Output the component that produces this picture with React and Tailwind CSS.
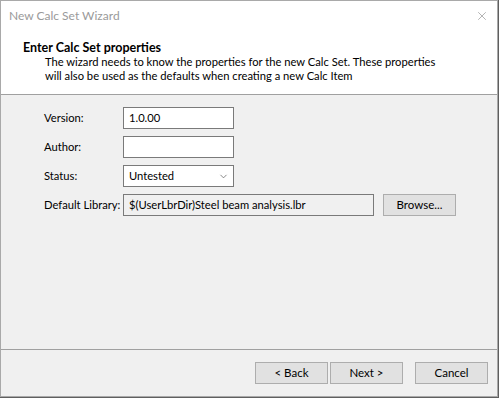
import { ChevronDown, X } from "lucide-react";

const font = { fontFamily: 'Lato, "Noto Sans", sans-serif' };

function Field({ label, children }) {
  return (
    <div className="flex items-center h-[22px]">
      <span className="w-[79px] text-black whitespace-nowrap">{label}</span>
      {children}
    </div>
  );
}

function Button({ children, className = "" }) {
  return (
    <button
      className={`h-[22px] w-[73px] bg-[#e1e1e1] border border-[#adadad] text-black text-[11.5px] leading-none ${className}`}
    >
      {children}
    </button>
  );
}

export default function App() {
  return (
    <div className="w-[499px] h-[398px] bg-[#5f5f5f] text-[11.2px]" style={font}>
      <div className="w-[498px] h-[397px] flex flex-col border border-[#a9a9a9] bg-[#f0f0f0]">
        {/* title bar */}
        <div className="h-[30px] bg-white flex items-center justify-between pl-[8px] pr-[8px]">
          <span className="text-[#9a9a9a] text-[12px]">New Calc Set Wizard</span>
          <X className="w-[14px] h-[14px] text-[#8a8a8a]" strokeWidth={1.1} />
        </div>

        {/* header */}
        <div className="h-[64px] bg-white border-b border-[#a0a0a0] pl-[22px] pt-[10px] leading-[14px]">
          <div className="font-bold text-black text-[12.5px]">Enter Calc Set properties</div>
          <div className="pl-[22px] text-black">
            The wizard needs to know the properties for the new Calc Set. These properties
            <br />
            will also be used as the defaults when creating a new Calc Item
          </div>
        </div>

        {/* body */}
        <div className="flex-1 flex flex-col gap-[7px] pl-[43px] pt-[12px] border-b border-[#a0a0a0]">
          <Field label="Version:">
            <div className="w-[111px] h-[22px] bg-white border border-[#7a7a7a] flex items-center px-[5px]">1.0.00</div>
          </Field>
          <Field label="Author:">
            <div className="w-[111px] h-[22px] bg-white border border-[#7a7a7a]" />
          </Field>
          <Field label="Status:">
            <div className="w-[111px] h-[22px] bg-white border border-[#7a7a7a] flex items-center justify-between pl-[5px] pr-[4px]">
              <span>Untested</span>
              <ChevronDown className="w-[11px] h-[11px] text-[#555]" strokeWidth={1.5} />
            </div>
          </Field>
          <Field label="Default Library:">
            <div className="w-[251px] h-[22px] bg-[#f0f0f0] border border-[#7a7a7a] flex items-center px-[5px]">
              $(UserLbrDir)Steel beam analysis.lbr
            </div>
            <Button className="ml-[9px]">Browse...</Button>
          </Field>
        </div>

        {/* footer */}
        <div className="h-[46px] flex items-center justify-end pr-[9px] pb-[1px]">
          <Button>&lt; Back</Button>
          <Button className="ml-[2px]">Next &gt;</Button>
          <Button className="ml-[12px]">Cancel</Button>
        </div>
      </div>
    </div>
  );
}
